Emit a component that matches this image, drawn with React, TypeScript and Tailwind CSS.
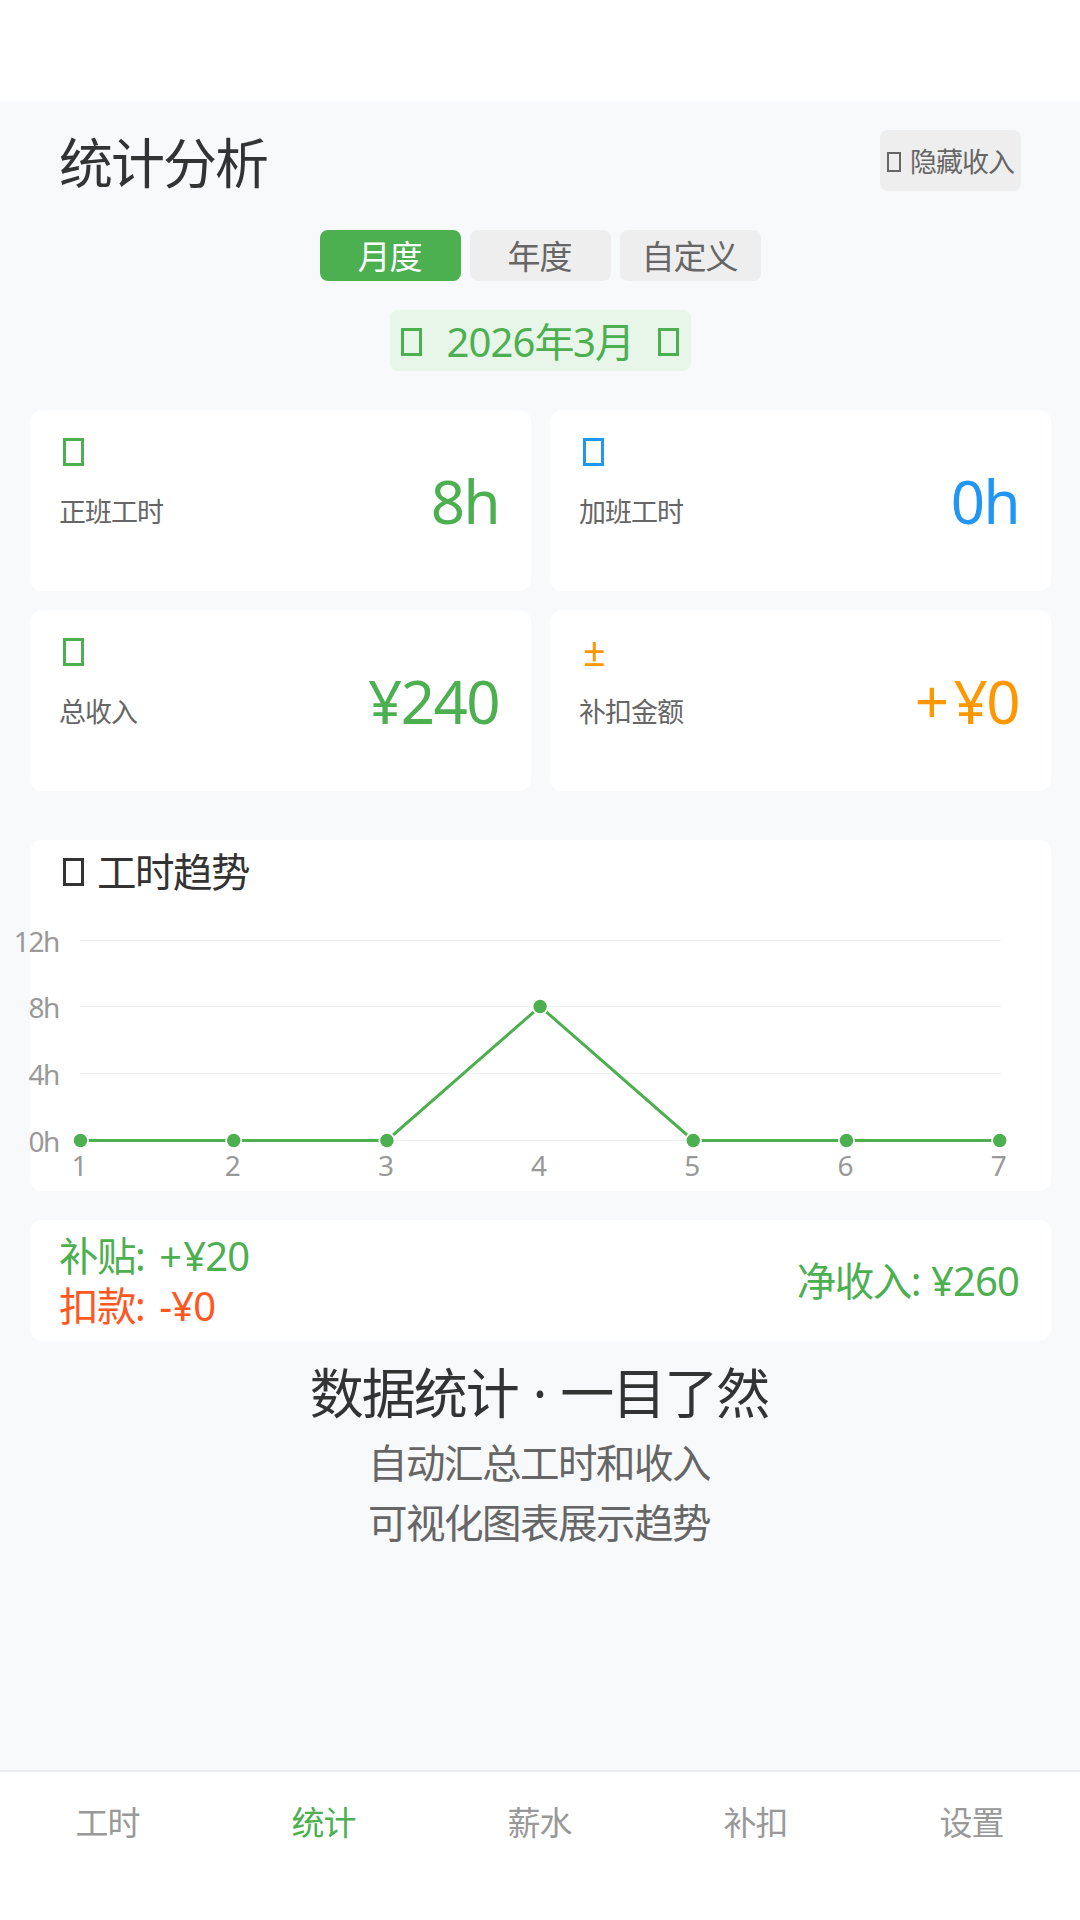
const stats = [
  { label: "正班工时", value: "8h", color: "text-[#4caf50]" },
  { label: "加班工时", value: "0h", color: "text-[#2196f3]" },
  { label: "总收入", value: "¥240", color: "text-[#4caf50]" },
  { label: "补扣金额", sign: "+", value: "¥0", color: "text-[#ff9800]", icon: "±" },
];

const tabs = ["月度", "年度", "自定义"];
const navItems = ["工时", "统计", "薪水", "补扣", "设置"];

// Hours worked per day
const hours = [0, 0, 0, 8, 0, 0, 0];
const gridLines = [
  { label: "12h", y: 100.5 },
  { label: "8h", y: 166.5 },
  { label: "4h", y: 233.5 },
  { label: "0h", y: 300.5 },
];

const points = hours.map((h, i) => ({
  x: 50.5 + i * 153.2,
  y: h === 8 ? 166.5 : 300.5,
}));

// Empty glyph box used in place of the emoji icons
function GlyphBox({ className = "" }: { className?: string }) {
  return (
    <span
      className={`block h-7 w-[21px] shrink-0 border-[3px] border-current ${className}`}
    />
  );
}

function StatCard({ label, sign, value, color, icon }: (typeof stats)[number]) {
  return (
    <div className="flex h-[181px] items-center justify-between rounded-xl bg-white pr-8 pl-[29px]">
      <div className="flex h-full flex-col pt-7">
        <div className={`h-7 pl-1 ${color}`}>
          {icon ? (
            <div className="text-[40px] leading-[25px]">{icon}</div>
          ) : (
            <GlyphBox />
          )}
        </div>
        <div className="mt-[31px] text-[27px] leading-[30px] tracking-[-1px] text-[#666]">
          {label}
        </div>
      </div>
      <div className={`text-[60px] leading-[60px] tracking-[-1.6px] ${color}`}>
        {sign && <span className="mr-[6px]">{sign}</span>}
        {value}
      </div>
    </div>
  );
}

function TrendChart() {
  return (
    <svg
      width="1021"
      height="351"
      viewBox="0 0 1021 351"
      className="absolute top-0 left-0 overflow-visible"
    >
      {gridLines.map((line) => (
        <g key={line.label}>
          <path d={`M50 ${line.y}H971`} stroke="#eeeeee" />
          <text
            x="29"
            y={line.y + 11}
            textAnchor="end"
            fontSize="28"
            letterSpacing="-1.4"
            fill="#999"
          >
            {line.label}
          </text>
        </g>
      ))}
      <polyline
        points={points.map((p) => `${p.x},${p.y}`).join(" ")}
        fill="none"
        stroke="#4caf50"
        strokeWidth="3"
      />
      {points.map((p, i) => (
        <g key={i}>
          <circle cx={p.x} cy={p.y} r="8.5" fill="#fff" />
          <circle cx={p.x} cy={p.y} r="6.7" fill="#4caf50" />
          <text
            x={p.x - 1}
            y="336"
            textAnchor="middle"
            fontSize="28"
            fill="#999"
          >
            {i + 1}
          </text>
        </g>
      ))}
    </svg>
  );
}

export default function App() {
  return (
    <div className="flex h-[1920px] w-[1080px] flex-col bg-[#f8f9fb] font-['Noto_Sans','Noto_Sans_CJK_SC',sans-serif]">
      <div className="h-[101px] bg-white" />

      {/* Header */}
      <header className="mt-[29px] flex h-[61px] items-center justify-between pr-[59px] pl-[59px]">
        <h1 className="pt-1 text-[54px] leading-[60px] tracking-[-2px] text-[#333]">
          统计分析
        </h1>
        <button className="flex h-[61px] w-[141px] items-center rounded-lg bg-[#eee] pt-[2px] pl-[7px] text-[#666]">
          <span className="block h-5 w-[14px] border-2 border-current" />
          <span className="ml-[9px] text-[27px] leading-[30px] tracking-[-1px] whitespace-nowrap">
            隐藏收入
          </span>
        </button>
      </header>

      {/* Period switch */}
      <div className="mt-[39px] flex justify-center gap-[9px]">
        {tabs.map((tab, i) => (
          <button
            key={tab}
            className={`h-[51px] w-[141px] rounded-lg pr-px text-[33px] leading-[53px] tracking-[-1px] ${
              i === 0 ? "bg-[#4caf50] text-white" : "bg-[#eee] text-[#666]"
            }`}
          >
            {tab}
          </button>
        ))}
      </div>

      <div className="mt-[29px] flex h-[61px] w-[301px] items-center self-center rounded-lg bg-[#e8f5e9] pt-[2px] pl-[11px] text-[#4caf50]">
        <GlyphBox />
        <div className="ml-[25px] w-[185px] text-[40px] leading-[59px] tracking-[-0.9px] whitespace-nowrap">
          2026<span className="tracking-[-1.5px]">年</span>3月
        </div>
        <GlyphBox className="ml-[26px]" />
      </div>

      {/* Summary cards */}
      <div className="mx-[30px] mt-[39px] grid w-[1021px] grid-cols-2 gap-[19px]">
        {stats.map((stat) => (
          <StatCard key={stat.label} {...stat} />
        ))}
      </div>

      {/* Trend */}
      <section className="relative mx-[30px] mt-[49px] h-[351px] w-[1021px] rounded-xl bg-white">
        <div className="flex items-center pt-[12px] pl-[33px] text-[#333]">
          <GlyphBox />
          <h2 className="ml-[13px] text-[39.5px] leading-10 tracking-[-1.5px]">
            工时趋势
          </h2>
        </div>
        <TrendChart />
      </section>

      {/* Income totals */}
      <section className="mx-[30px] mt-[29px] flex h-[121px] w-[1021px] items-center justify-between rounded-xl bg-white pt-px pr-8 pl-[29px] text-[40px] tracking-[-0.9px]">
        <div className="leading-[50px]">
          <div className="text-[#4caf50] [word-spacing:5px]">
            <span className="text-[39.5px] tracking-[-1.5px]">补贴</span>:{" "}
            <span className="mr-[2px]">+</span>¥20
          </div>
          <div className="text-[#ff5722] [word-spacing:5px]">
            <span className="text-[39.5px] tracking-[-1.5px]">扣款</span>: -¥0
          </div>
        </div>
        <div className="leading-[50px] text-[#4caf50] [word-spacing:1px]">
          <span className="text-[39.5px] tracking-[-1.5px]">净收入</span>: ¥260
        </div>
      </section>

      <div className="mt-[22px] pr-[2px] text-center">
        <div className="text-[54px] leading-[60px] tracking-[-2px] text-[#333] [word-spacing:3px]">
          数据统计 · 一目了然
        </div>
        <div className="mt-[10px] text-[39.5px] leading-[60px] tracking-[-1.5px] text-[#666]">
          <p>自动汇总工时和收入</p>
          <p>可视化图表展示趋势</p>
        </div>
      </div>

      {/* Bottom navigation */}
      <nav className="mt-auto flex h-[150px] border-t-2 border-[#ebedef] bg-white pt-[30px]">
        {navItems.map((item) => (
          <div
            key={item}
            className={`flex-1 pr-px text-center text-[33px] leading-[41px] tracking-[-1px] ${
              item === "统计" ? "text-[#4caf50]" : "text-[#999]"
            }`}
          >
            {item}
          </div>
        ))}
      </nav>
    </div>
  );
}
